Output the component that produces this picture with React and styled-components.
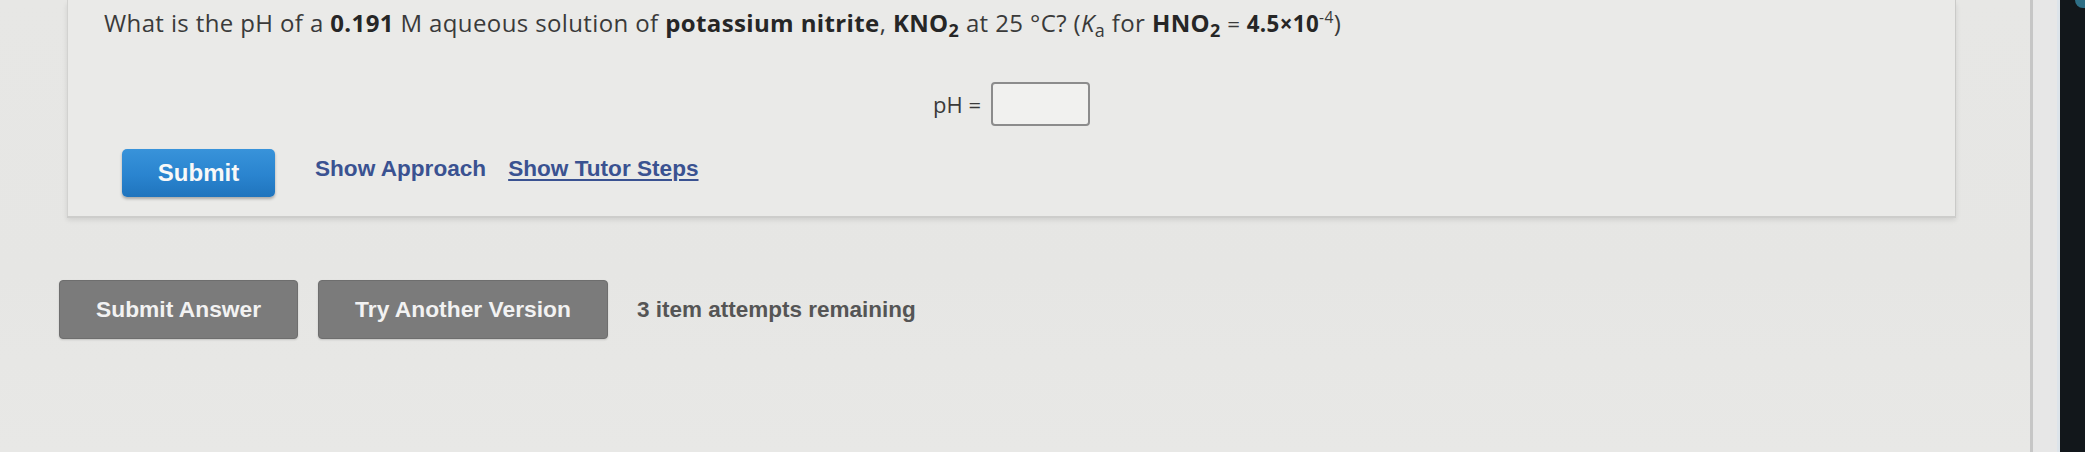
import React from "react";
import styled, { createGlobalStyle } from "styled-components";

const Global = createGlobalStyle`
  html, body { margin: 0; padding: 0; }
  body {
    width: 2085px;
    height: 452px;
    overflow: hidden;
    background: #e6e6e4;
  }
  * { box-sizing: border-box; }
`;

const Screen = styled.div`
  display: flex;
  width: 2085px;
  height: 452px;
`;

const Page = styled.main`
  flex: 1;
  display: flex;
  flex-direction: column;
  background: linear-gradient(180deg, #e7e7e5 0%, #e6e6e4 60%, #e8e8e6 100%);
`;

const Gutter = styled.div`
  width: 27px;
  border-left: 3px solid #c6c6c6;
  background: #e7e7e7;
`;

const Bezel = styled.div`
  position: relative;
  width: 28px;
  background: #12171b;
  border-left: 3px solid #dde4ea;
  &::after {
    content: "";
    position: absolute;
    right: 0;
    top: 0;
    width: 10px;
    height: 8px;
    background: #2e6f86;
    border-bottom-left-radius: 8px;
  }
`;

const Card = styled.section`
  margin-left: 67px;
  width: 1889px;
  height: 216px;
  padding: 7px 36px 0 36px;
  display: flex;
  flex-direction: column;
  background: #eaeae8;
  border-left: 1px solid #d2d2d0;
  border-right: 1px solid #cacac8;
  box-shadow: 0 2px 0 #cdcdcb, 0 4px 5px rgba(0, 0, 0, 0.1);
`;

const Question = styled.p`
  margin: 0;
  font-family: "Open Sans", "Noto Sans", sans-serif;
  font-size: 24px;
  letter-spacing: 0.38px;
  line-height: 32px;
  color: #3a3a3a;
  white-space: nowrap;
`;

const Strong = styled.b`
  font-weight: 700;
  color: #262626;
`;

const Sub = styled.sub`
  font-size: 0.75em;
  line-height: 0;
  vertical-align: -0.3em;
`;

const Sup = styled.sup`
  font-size: 0.7em;
  line-height: 0;
  vertical-align: 0.55em;
`;

const Small = styled.span`
  font-size: 0.93em;
`;

const AnswerRow = styled.div`
  margin-top: 42px;
  display: flex;
  justify-content: center;
  align-items: center;
  gap: 10px;
`;

const Label = styled.label`
  font-family: "Open Sans", "Noto Sans", sans-serif;
  font-size: 22px;
  color: #3a3a3a;
`;

const Input = styled.input`
  width: 99px;
  height: 44px;
  border: 2px solid #8c8c8c;
  border-radius: 4px;
  background: #f1f1ef;
  outline: none;
`;

const ActionRow = styled.div`
  margin-top: 23px;
  padding-left: 18px;
  display: flex;
  align-items: center;
`;

const PrimaryButton = styled.button`
  width: 153px;
  height: 48px;
  border: none;
  border-radius: 5px;
  background: linear-gradient(180deg, #3893da 0%, #2a84cf 55%, #1f74bd 100%);
  box-shadow: 0 2px 3px rgba(0, 0, 0, 0.28);
  color: #f8f8f8;
  font-family: "Liberation Sans", Arial, sans-serif;
  font-weight: 700;
  font-size: 24px;
  padding: 0;
`;

const Link = styled.a`
  margin-left: ${(p) => p.$gap}px;
  padding-bottom: 8px;
  font-family: "Liberation Sans", Arial, sans-serif;
  font-weight: 700;
  font-size: 22.6px;
  color: #3a5291;
  text-decoration: ${(p) => (p.$underline ? "underline" : "none")};
  text-underline-offset: 3px;
  text-decoration-thickness: 2px;
  cursor: pointer;
`;

const BottomRow = styled.div`
  margin-top: 64px;
  padding-left: 59px;
  display: flex;
  align-items: center;
  gap: 20px;
`;

const GrayButton = styled.button`
  height: 59px;
  padding: 0 36px;
  border: 1px solid #6e6e6e;
  border-radius: 4px;
  background: #7b7b7b;
  color: #f2f2f2;
  font-family: "Liberation Sans", Arial, sans-serif;
  font-weight: 700;
  font-size: 22.8px;
  box-shadow: 0 1px 2px rgba(0, 0, 0, 0.15);
`;

const Remaining = styled.span`
  margin-left: 9px;
  font-family: "Liberation Sans", Arial, sans-serif;
  font-weight: 700;
  font-size: 22.5px;
  color: #555555;
`;

export default function App() {
  return (
    <>
      <Global />
      <Screen>
        <Page>
          <Card>
            <Question>
              What is the pH of a <Strong>0.191</Strong> M aqueous solution of{" "}
              <Strong>potassium nitrite</Strong>,{" "}
              <Strong>
                KNO<Sub>2</Sub>
              </Strong>{" "}
              at 25 °C? (<i>K</i>
              <Sub>a</Sub> for{" "}
              <Strong>
                HNO<Sub>2</Sub>
              </Strong>{" "}
              <Small>
                = <Strong>4.5×10</Strong>
                <Sup>-4</Sup>
              </Small>
              )
            </Question>
            <AnswerRow>
              <Label htmlFor="ph">pH =</Label>
              <Input id="ph" type="text" />
            </AnswerRow>
            <ActionRow>
              <PrimaryButton>Submit</PrimaryButton>
              <Link $gap={40}>Show Approach</Link>
              <Link $gap={22} $underline>
                Show Tutor Steps
              </Link>
            </ActionRow>
          </Card>
          <BottomRow>
            <GrayButton>Submit Answer</GrayButton>
            <GrayButton>Try Another Version</GrayButton>
            <Remaining>3 item attempts remaining</Remaining>
          </BottomRow>
        </Page>
        <Gutter />
        <Bezel />
      </Screen>
    </>
  );
}
